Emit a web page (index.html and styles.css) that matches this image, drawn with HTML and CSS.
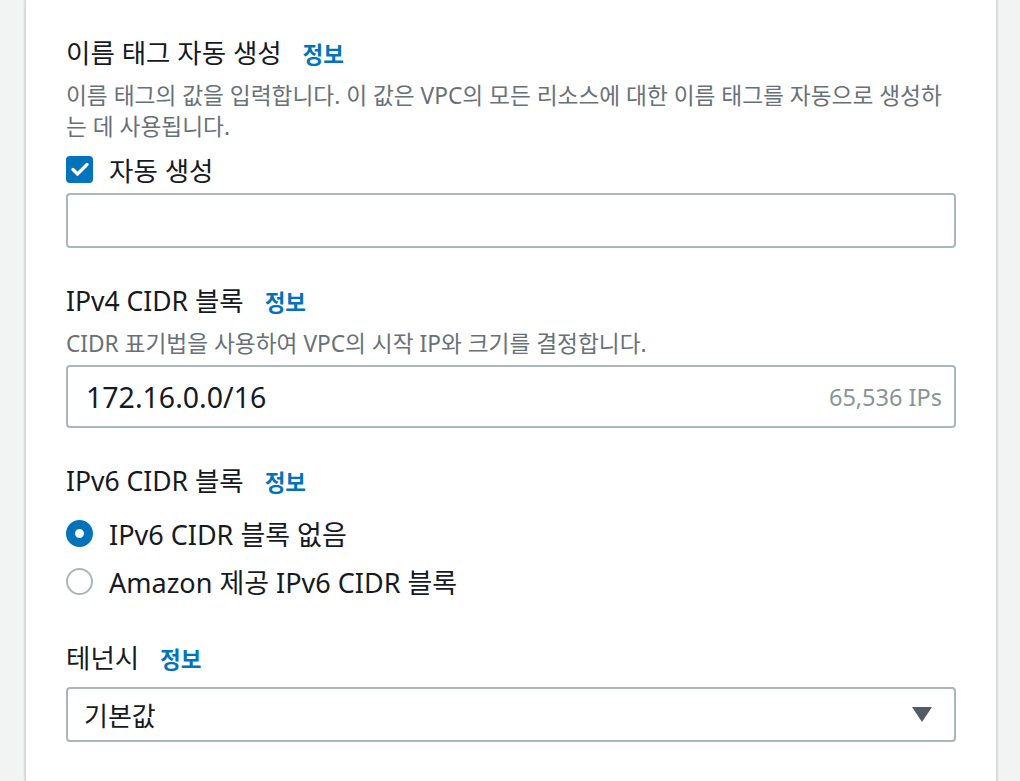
FILE: index.html
```html
<!DOCTYPE html>
<html lang="ko">
<head>
    <meta charset="UTF-8">
    <title>VPC 설정</title>
    <link rel="stylesheet" href="styles.css">
</head>
<body>

<div class="page">
    <div class="card">

        <div class="field">
            <div class="label">이름 태그 자동 생성 <a class="info" href="#">정보</a></div>
            <p class="desc">이름 태그의 값을 입력합니다. 이 값은 VPC의 모든 리소스에 대한 이름 태그를 자동으로 생성하는 데 사용됩니다.</p>
            <label class="check">
                <span class="checkbox">
                    <svg width="18" height="14" viewBox="0 0 18 14"><path d="M2 7.5l4.5 4.5L16 2.5" fill="none" stroke="#fff" stroke-width="3.2" stroke-linecap="round" stroke-linejoin="round"/></svg>
                </span>
                자동 생성
            </label>
            <div class="input name-input"></div>
        </div>

        <div class="field">
            <div class="label">IPv4 CIDR 블록 <a class="info" href="#">정보</a></div>
            <p class="desc">CIDR 표기법을 사용하여 VPC의 시작 IP와 크기를 결정합니다.</p>
            <div class="input cidr-input">
                <span class="value">172.16.0.0/16</span>
                <span class="hint">65,536 IPs</span>
            </div>
        </div>

        <div class="field">
            <div class="label">IPv6 CIDR 블록 <a class="info" href="#">정보</a></div>
            <div class="radios">
                <label class="radio"><span class="dot selected"></span>IPv6 CIDR 블록 없음</label>
                <label class="radio"><span class="dot"></span>Amazon 제공 IPv6 CIDR 블록</label>
            </div>
        </div>

        <div class="field">
            <div class="label">테넌시 <a class="info" href="#">정보</a></div>
            <div class="input select">
                <span class="value">기본값</span>
                <span class="caret"></span>
            </div>
        </div>

    </div>
</div>

</body>
</html>
```

FILE: styles.css
```css
body {
    margin: 0;
    background-color: #f2f3f3;
    color: #16191f;
    font-family: "Noto Sans", "Noto Sans CJK KR", sans-serif;
    height: 100vh;
    overflow: hidden;
}

.page {
    display: flex;
    height: 100%;
    padding: 0 23px 0 25px;
}

.card {
    flex: 1;
    background-color: white;
    border-left: 1px solid #d5dbdb;
    border-right: 1px solid #d5dbdb;
    box-shadow: 0 0 2px rgba(0, 28, 36, 0.3);
    padding: 38px 40px 0 40px;
}

.field {
    margin-bottom: 38px;
}

.label {
    font-size: 26.5px;
    line-height: 30px;
}

.info {
    color: #0073bb;
    font-weight: bold;
    font-size: 22.5px;
    text-decoration: none;
    margin-left: 14px;
}

.desc {
    margin: 10px 0 0;
    color: #687078;
    font-size: 22.7px;
    line-height: 31px;
    word-break: break-all;
}

.check {
    display: flex;
    align-items: center;
    gap: 16px;
    font-size: 26.5px;
    margin-top: 12px;
    height: 30px;
}

.checkbox {
    width: 27px;
    height: 27px;
    border-radius: 4px;
    background-color: #0073bb;
    display: flex;
    align-items: center;
    justify-content: center;
}

.input {
    border: 2px solid #aab7b8;
    border-radius: 4px;
    box-sizing: border-box;
    display: flex;
    align-items: center;
    justify-content: space-between;
}

.name-input {
    margin-top: 9px;
    height: 55px;
}

.cidr-input {
    margin-top: 6px;
    height: 63px;
    padding: 0 12px 0 18px;
}

.cidr-input .value {
    font-size: 28.5px;
}

.hint {
    color: #879596;
    font-size: 23.5px;
}

.radios {
    margin-top: 11px;
}

.radio {
    display: flex;
    align-items: center;
    gap: 16px;
    height: 48px;
    font-size: 27px;
}

.dot {
    width: 27px;
    height: 27px;
    box-sizing: border-box;
    border-radius: 50%;
    border: 2.5px solid #aab7b8;
}

.dot.selected {
    border: 9px solid #0073bb;
}

.select {
    margin-top: 12px;
    height: 55px;
    padding: 0 22px 0 16px;
}

.select .value {
    font-size: 26px;
}

.caret {
    width: 0;
    height: 0;
    border-left: 10px solid transparent;
    border-right: 10px solid transparent;
    border-top: 15px solid #545b64;
}
```
